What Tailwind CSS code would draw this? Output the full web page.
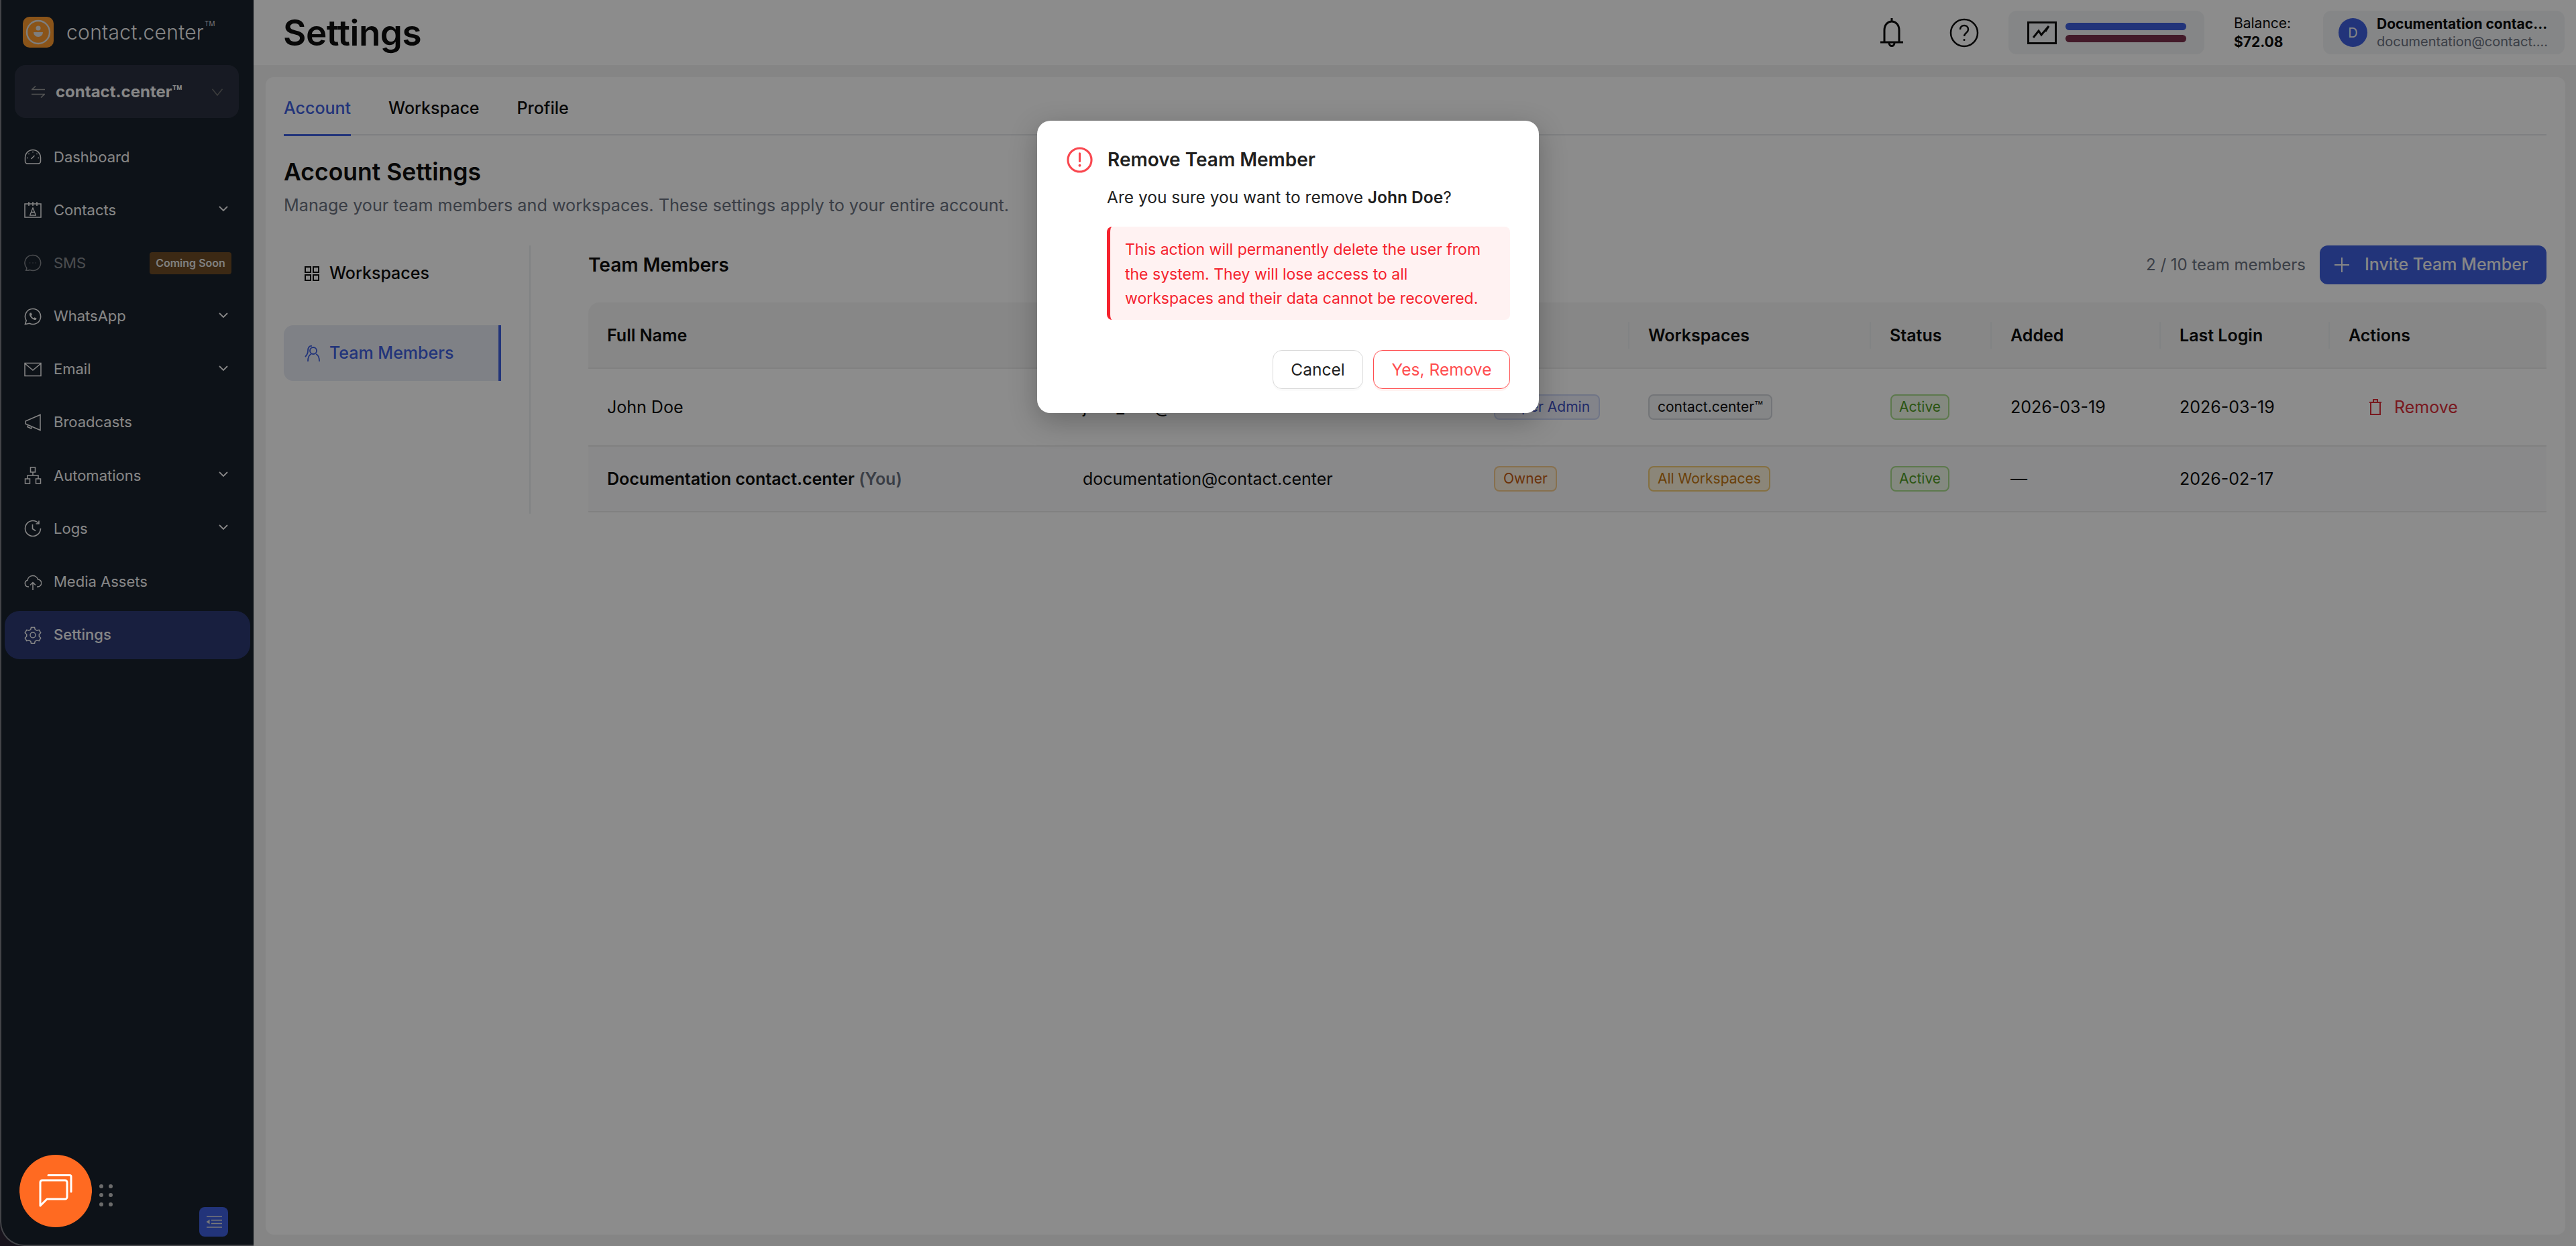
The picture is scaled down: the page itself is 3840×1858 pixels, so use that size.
<!DOCTYPE html>
<html lang="en">
<head>
    <meta charset="UTF-8">
    <title>Settings</title>
    <script src="https://cdn.jsdelivr.net/npm/@tailwindcss/browser@4"></script>
</head>

<body class="bg-[#2b2433] text-[#0d0d0d] font-['Inter','Noto_Sans',sans-serif] overflow-hidden">
    <div class="relative w-[3840px] h-[1858px] flex overflow-hidden">

        <!-- Sidebar -->
        <aside class="w-[378px] h-[1858px] shrink-0 bg-[#19212c] border-l-2 border-b-2 border-[#7a7d84] rounded-bl-[36px] flex flex-col text-[#f5f5f5]">
            <div class="h-[97px] pl-[32px] flex items-center gap-[19px] pb-[2px]">
                <div class="w-[46px] h-[46px] rounded-[10px] bg-[#fb9a2e] flex items-center justify-center">
                    <svg viewBox="0 0 40 40" class="w-[40px] h-[40px]" fill="none">
                        <circle cx="20" cy="20" r="17" stroke="#e5e5e5" stroke-width="2.4" />
                        <circle cx="20" cy="14" r="3.6" fill="#e5e5e5" />
                        <path d="M13 20h14a7 7 0 0 1-14 0z" fill="#e5e5e5" />
                    </svg>
                </div>
                <div class="flex items-start text-[30px] leading-[40px] font-light tracking-[0.3px]">contact.center<span class="text-[10px] leading-[14px] ml-[1px]">TM</span></div>
            </div>

            <div class="ml-[20px] w-[334px] h-[79px] rounded-[16px] bg-[#2a3141] flex items-center pl-[23px] pr-[22px]">
                <svg viewBox="0 0 24 24" class="w-[24px] h-[24px] text-[#9a9a9a]" fill="none" stroke="currentColor" stroke-width="1.6">
                    <path d="M2 8.5h20M8 3.5L2.5 8.5M2 15.5h20M16 20.5l5.5-5" />
                </svg>
                <span class="ml-[14px] text-[24px] font-bold">contact.center™</span>
                <svg viewBox="0 0 24 24" class="ml-auto w-[20px] h-[20px] text-[#6f6f6f]" fill="none" stroke="currentColor" stroke-width="1.8"><path d="M3 7l9 11 9-11" /></svg>
            </div>

            <nav class="mt-[22px] px-[5px] flex flex-col gap-[7.2px] text-[22px]">
                <a class="h-[72px] flex items-center pl-[29px] pr-[33px]">
                    <svg viewBox="0 0 26 26" class="w-[26px] h-[26px]" fill="none" stroke="currentColor" stroke-width="1.5"><path d="M5 23a3.5 3.5 0 0 1-3.5-3.5V14a11.5 11.5 0 0 1 23 0v5.500A3.500 3.500 0 0 1 21 23z" /><path d="M10.500 16l5-5M13 5v1.500M6.500 8l1 1M19.500 8l-1 1M4 14.500h1.500M22 14.500h-1.500" /></svg>
                    <span class="ml-[18px]">Dashboard</span>
                </a>
                <a class="h-[72px] flex items-center pl-[29px] pr-[33px]">
                    <svg viewBox="0 0 26 26" class="w-[26px] h-[26px]" fill="none" stroke="currentColor" stroke-width="1.5"><path d="M1 4h24v20H1zM7 1v6M13 1v6M19 1v6" /><path d="M9 20l4-10 4 10M10.500 16.500h5M8 21h10" stroke-width="1.300" /></svg>
                    <span class="ml-[18px]">Contacts</span>
                    <svg viewBox="0 0 14 10" class="ml-auto w-[14px] h-[10px] -mt-[4px]" fill="none" stroke="currentColor" stroke-width="1.800"><path d="M1 2l6 6 6-6" /></svg>
                </a>
                <a class="h-[72px] flex items-center pl-[29px] pr-[28px]">
                    <svg viewBox="0 0 26 26" class="w-[26px] h-[26px] opacity-50" fill="none" stroke="currentColor" stroke-width="1.500"><path d="M13 1.500a11.500 11.500 0 1 1-4.500 22c-2 .8-4.500 1-6 .6 1-1 1.500-2.500 1-4A11.500 11.500 0 0 1 13 1.500z" /><path d="M8.500 13h.6M12.700 13h.6M16.900 13h.6" stroke-width="1.800" /></svg>
                    <span class="ml-[18px] opacity-50">SMS</span>
                    <span class="ml-auto w-[122px] h-[33px] rounded-[4px] bg-[#6d4c26] flex items-center justify-center text-[16px] font-semibold text-[#e8e8e8]">Coming Soon</span>
                </a>
                <a class="h-[72px] flex items-center pl-[29px] pr-[33px]">
                    <svg viewBox="0 0 26 26" class="w-[26px] h-[26px]" fill="none" stroke="currentColor" stroke-width="1.600"><path d="M13 1.500a11.500 11.500 0 1 1-5 21.800L1.500 24.500l1.700-5.500A11.500 11.500 0 0 1 13 1.500z" /><path d="M9 7.500c-1.500 1-1.500 3 0 5.500s4 4.500 6.500 5c1.500.3 3-.8 3-2.300l-3-1.500-1.300 1.300c-1.500-.6-3-2.200-3.700-3.800l1.300-1.200-1.200-3z" fill="currentColor" stroke="none" /></svg>
                    <span class="ml-[18px]">WhatsApp</span>
                    <svg viewBox="0 0 14 10" class="ml-auto w-[14px] h-[10px] -mt-[4px]" fill="none" stroke="currentColor" stroke-width="1.800"><path d="M1 2l6 6 6-6" /></svg>
                </a>
                <a class="h-[72px] flex items-center pl-[29px] pr-[33px]">
                    <svg viewBox="0 0 26 26" class="w-[26px] h-[26px]" fill="none" stroke="currentColor" stroke-width="1.500"><path d="M1 3.500h24v19H1zM1 4l12 10L25 4" /></svg>
                    <span class="ml-[18px]">Email</span>
                    <svg viewBox="0 0 14 10" class="ml-auto w-[14px] h-[10px] -mt-[4px]" fill="none" stroke="currentColor" stroke-width="1.800"><path d="M1 2l6 6 6-6" /></svg>
                </a>
                <a class="h-[72px] flex items-center pl-[29px] pr-[33px]">
                    <svg viewBox="0 0 26 26" class="w-[26px] h-[26px]" fill="none" stroke="currentColor" stroke-width="1.500"><path d="M24 1.500v23L2 15v-4z" /><path d="M6 17l-1 2.500 5.500 2.500 1-2" /></svg>
                    <span class="ml-[18px]">Broadcasts</span>
                </a>
                <a class="h-[72px] flex items-center pl-[29px] pr-[33px]">
                    <svg viewBox="0 0 26 26" class="w-[26px] h-[26px]" fill="none" stroke="currentColor" stroke-width="1.500"><path d="M9.500 1h7v7h-7zM1.500 18h7v7h-7zM17.500 18h7v7h-7zM13 8v5M5 18v-5h16v5" /></svg>
                    <span class="ml-[18px]">Automations</span>
                    <svg viewBox="0 0 14 10" class="ml-auto w-[14px] h-[10px] -mt-[4px]" fill="none" stroke="currentColor" stroke-width="1.800"><path d="M1 2l6 6 6-6" /></svg>
                </a>
                <a class="h-[72px] flex items-center pl-[29px] pr-[33px]">
                    <svg viewBox="0 0 26 26" class="w-[26px] h-[26px]" fill="none" stroke="currentColor" stroke-width="1.600"><path d="M24.500 13A11.500 11.500 0 1 1 13 1.500c3.500 0 6.500 1.500 8.500 4M22 1.500v4.500h-4.500M12.500 7v6.500l4.500 3" /></svg>
                    <span class="ml-[18px]">Logs</span>
                    <svg viewBox="0 0 14 10" class="ml-auto w-[14px] h-[10px] -mt-[4px]" fill="none" stroke="currentColor" stroke-width="1.800"><path d="M1 2l6 6 6-6" /></svg>
                </a>
                <a class="h-[72px] flex items-center pl-[29px] pr-[33px]">
                    <svg viewBox="0 0 26 26" class="w-[26px] h-[26px]" fill="none" stroke="currentColor" stroke-width="1.500"><path d="M7 20H6a5 5 0 0 1-1-9.800A8 8 0 0 1 20.500 9 5.500 5.500 0 0 1 20 20h-1M13 25V14M9 17.500l4-4 4 4" /></svg>
                    <span class="ml-[18px]">Media Assets</span>
                </a>
                <a class="h-[72px] flex items-center pl-[29px] pr-[33px] rounded-[22px] bg-[#2c3a74] font-medium">
                    <svg viewBox="0 0 26 26" class="w-[26px] h-[26px]" fill="none" stroke="currentColor" stroke-width="1.500"><path d="M10.500 1.500h5l.8 3.200 2.700 1.600 3.200-.9 2.500 4.300-2.400 2.300v3l2.400 2.300-2.500 4.300-3.200-.9-2.700 1.600-.8 3.200h-5l-.8-3.200-2.700-1.600-3.200.9-2.500-4.300 2.400-2.300v-3L1.300 9.700l2.500-4.300 3.200.9 2.700-1.600z" /><circle cx="13" cy="13" r="4" /></svg>
                    <span class="ml-[18px]">Settings</span>
                </a>
            </nav>

            <div class="mt-auto mb-[12px] ml-[295px] w-[43px] h-[44px] rounded-[8px] bg-[#3e5fde] flex items-center justify-center">
                <svg viewBox="0 0 24 20" class="w-[24px] h-[20px]" fill="none" stroke="#dcdcdc" stroke-width="1.600"><path d="M1 2h23M8 7.500h16M8 12.500h16M1 18h23" /><path d="M5.500 6.500v7L0.500 10z" fill="#dcdcdc" stroke="none" /></svg>
            </div>
        </aside>

        <!-- Main column -->
        <div class="flex-1 h-[1858px] bg-[#f2f2f2] flex flex-col">
            <header class="h-[97px] shrink-0 bg-white flex items-center pl-[44px] pr-[18px]">
                <h1 class="text-[53px] leading-[64px] font-semibold tracking-[-0.5px]">Settings</h1>
                <div class="ml-auto flex items-center">
                    <svg viewBox="0 0 36 46" class="w-[36px] h-[46px]" fill="none" stroke="#0d0d0d" stroke-width="3"><path d="M18 1v5M7 36V19C7 11 12 6 18 6s11 5 11 13v17M1 37h34M14 38c0 6 8 6 8 0" /></svg>
                    <svg viewBox="0 0 44 44" class="ml-[68px] w-[44px] h-[44px]" fill="none" stroke="#0d0d0d" stroke-width="2.500"><circle cx="22" cy="22" r="20" /><path d="M16 17c0-8 12-8 12 0 0 5-6 5-6 10" /><circle cx="22" cy="32.500" r="1.500" fill="#0d0d0d" stroke="none" /></svg>
                    <div class="ml-[44px] w-[292px] h-[65px] rounded-[12px] bg-[#f3f4f6] flex items-center pl-[28px]">
                        <svg viewBox="0 0 44 34" class="w-[44px] h-[34px]" fill="none" stroke="#0d0d0d" stroke-width="3"><path d="M1.500 1.500h41v31h-41zM9 24l8-10 4 6 11-13-5 8" /></svg>
                        <div class="ml-[13px] w-[180px] flex flex-col gap-[7px]">
                            <div class="h-[11px] rounded-full bg-[#3e5fde]"></div>
                            <div class="h-[11px] rounded-full bg-[#7a314c]"></div>
                        </div>
                    </div>
                    <div class="ml-[44px] w-[133px] text-[21px] leading-[28px]">
                        <div>Balance:</div>
                        <div class="font-bold">$72.08</div>
                    </div>
                    <div class="w-[360px] h-[65px] rounded-[12px] bg-[#f3f4f6] flex items-center pl-[23px]">
                        <div class="w-[43px] h-[43px] rounded-full bg-[#3e5fde] flex items-center justify-center text-[20px] text-[#f5f5f5]">D</div>
                        <div class="ml-[14px] whitespace-nowrap">
                            <div class="text-[21px] leading-[27px] font-bold">Documentation contac...</div>
                            <div class="text-[20px] leading-[26px] text-[#6b7280]">documentation@contact....</div>
                        </div>
                    </div>
                </div>
            </header>

            <main class="flex-1 pl-[18px] pr-[17px] pt-[18px] pb-[17px] flex">
                <section class="flex-1 bg-white rounded-[12px] pl-[27px] pr-[28px] flex flex-col">
                    <!-- Tabs -->
                    <div class="h-[87px] border-b-2 border-[#e5e7eb] flex gap-[56px] text-[25px] font-medium">
                        <a class="h-[88px] pt-[28px] border-b-[3px] border-[#3e5fde] text-[#3e5fde]">Account</a>
                        <a class="pt-[28px]">Workspace</a>
                        <a class="pt-[28px]">Profile</a>
                    </div>

                    <h2 class="mt-[30px] text-[35.500px] leading-[50px] font-semibold">Account Settings</h2>
                    <p class="mt-[6px] text-[25.200px] leading-[36px] text-[#6b7280]">Manage your team members and workspaces. These settings apply to your entire account.</p>

                    <div class="mt-[42px] flex items-start">
                        <!-- Settings sub navigation -->
                        <div class="w-[368px] h-[400px] border-r-2 border-[#eceef1] pr-[42px] text-[25px]">
                            <a class="h-[83px] flex items-center pl-[31px] font-medium">
                                <svg viewBox="0 0 22 22" class="w-[22px] h-[22px]" fill="none" stroke="currentColor" stroke-width="2"><path d="M1 1h8v8H1zM13 1h8v8h-8zM1 13h8v8H1zM13 13h8v8h-8z" /></svg>
                                <span class="ml-[15px]">Workspaces</span>
                            </a>
                            <a class="h-[83px] mt-[36px] flex items-center pl-[31px] rounded-l-[14px] bg-[#e8ebf5] border-r-4 border-[#3e5fde] text-[#3e5fde] font-medium">
                                <svg viewBox="0 0 24 26" class="w-[24px] h-[26px]" fill="none" stroke="currentColor" stroke-width="1.800"><circle cx="13" cy="9" r="5" /><path d="M5 25c0-7 2-10 5-11M22 25c0-7-2-10-5-11M11 2C7 1 5 5 5 9c0 3-2 7-4 9" /></svg>
                                <span class="ml-[13px]">Team Members</span>
                            </a>
                        </div>

                        <!-- Team members table -->
                        <div class="flex-1 ml-[86px] min-w-0">
                            <div class="h-[58px] flex items-center">
                                <h3 class="text-[28px] font-semibold">Team Members</h3>
                                <span class="ml-auto text-[24px] text-[#6b7280]">2 / 10 team members</span>
                                <button class="ml-[21px] w-[338px] h-[58px] rounded-[12px] bg-[#3e5fde] text-[#f5f5f5] text-[25px] font-medium flex items-center pl-[22px]">
                                    <svg viewBox="0 0 22 22" class="w-[22px] h-[22px]" fill="none" stroke="currentColor" stroke-width="2"><path d="M11 0v22M0 11h22" /></svg>
                                    <span class="ml-[23px]">Invite Team Member</span>
                                </button>
                            </div>

                            <table class="mt-[27px] w-[2919px] table-fixed text-[25px] leading-[32px]">
                                <colgroup>
                                    <col class="w-[709px]">
                                    <col class="w-[613px]">
                                    <col class="w-[228px]">
                                    <col class="w-[360px]">
                                    <col class="w-[180px]">
                                    <col class="w-[252px]">
                                    <col class="w-[252px]">
                                    <col class="w-[325px]">
                                </colgroup>
                                <thead class="bg-[#f6f6f6] text-left">
                                    <tr class="h-[98px] border-b-2 border-[#ececec]">
                                        <th class="pl-[28px] font-semibold rounded-tl-[16px]">Full Name</th>
                                        <th class="pl-[28px] font-semibold">Email</th>
                                        <th class="pl-[28px] font-semibold">Role</th>
                                        <th class="pl-[30px] font-semibold"><div class="border-l-2 border-[#eceef1] -ml-[30px] pl-[28px] leading-[40px]">Workspaces</div></th>
                                        <th class="pl-[30px] font-semibold"><div class="border-l-2 border-[#eceef1] -ml-[30px] pl-[28px] leading-[40px]">Status</div></th>
                                        <th class="pl-[30px] font-semibold"><div class="border-l-2 border-[#eceef1] -ml-[30px] pl-[28px] leading-[40px]">Added</div></th>
                                        <th class="pl-[30px] font-semibold"><div class="border-l-2 border-[#eceef1] -ml-[30px] pl-[28px] leading-[40px]">Last Login</div></th>
                                        <th class="pl-[30px] font-semibold rounded-tr-[16px]"><div class="border-l-2 border-[#eceef1] -ml-[30px] pl-[28px] leading-[40px]">Actions</div></th>
                                    </tr>
                                </thead>
                                <tbody>
                                    <tr class="h-[116px] border-b-2 border-[#ececec]">
                                        <td class="pl-[28px]">John Doe</td>
                                        <td class="pl-[28px]">john_doe@contact.center</td>
                                        <td class="pl-[28px]"><span class="inline-flex items-center h-[38px] px-[13px] rounded-[8px] border-2 border-[#cdd5f5] bg-[#eef1fc] text-[21px] text-[#3e4fc0] whitespace-nowrap">Super Admin</span></td>
                                        <td class="pl-[30px]"><span class="inline-flex items-center h-[38px] px-[12px] rounded-[8px] border-2 border-[#d1d5db] bg-[#f3f4f6] text-[21px] whitespace-nowrap">contact.center™</span></td>
                                        <td class="pl-[31px]"><span class="inline-flex items-center h-[38px] px-[11px] rounded-[8px] border-2 border-[#a9dc8c] bg-[#f0fae9] text-[21px] text-[#4f9a1e]">Active</span></td>
                                        <td class="pl-[30px]">2026-03-19</td>
                                        <td class="pl-[30px]">2026-03-19</td>
                                        <td class="pl-[60px]">
                                            <span class="flex items-center text-[#dc2f3a]">
                                                <svg viewBox="0 0 20 24" class="w-[20px] h-[24px]" fill="none" stroke="currentColor" stroke-width="2"><path d="M1 5h18M7 5V1h6v4M3 5v18h14V5" /></svg>
                                                <span class="ml-[18px]">Remove</span>
                                            </span>
                                        </td>
                                    </tr>
                                    <tr class="h-[98px] border-b-2 border-[#ececec] bg-[#f9fafc]">
                                        <td class="pl-[28px] font-semibold whitespace-nowrap">Documentation contact.center <span class="text-[#6b7280]">(You)</span></td>
                                        <td class="pl-[28px]">documentation@contact.center</td>
                                        <td class="pl-[28px]"><span class="inline-flex items-center h-[38px] px-[12px] rounded-[8px] border-2 border-[#f6cd8f] bg-[#fdf2e0] text-[21px] text-[#c2590f]">Owner</span></td>
                                        <td class="pl-[30px]"><span class="inline-flex items-center h-[38px] px-[12px] rounded-[8px] border-2 border-[#f3cc78] bg-[#fdf4dd] text-[21px] text-[#c2740f] whitespace-nowrap">All Workspaces</span></td>
                                        <td class="pl-[31px]"><span class="inline-flex items-center h-[38px] px-[11px] rounded-[8px] border-2 border-[#a9dc8c] bg-[#f0fae9] text-[21px] text-[#4f9a1e]">Active</span></td>
                                        <td class="pl-[30px]">—</td>
                                        <td class="pl-[30px]">2026-02-17</td>
                                        <td></td>
                                    </tr>
                                </tbody>
                            </table>
                        </div>
                    </div>
                </section>
            </main>
        </div>

        <!-- Overlay -->
        <div class="absolute inset-0 bg-black/45"></div>

        <!-- Chat launcher stays above the overlay -->
        <div class="absolute left-[29px] top-[1722px] flex items-center">
            <div class="w-[108px] h-[108px] rounded-full bg-[#ff6a21] flex items-center justify-center">
                <svg viewBox="0 0 50 50" class="w-[50px] h-[50px]" fill="none" stroke="#fff" stroke-width="3" stroke-linejoin="round" stroke-linecap="round"><path d="M2 47V12a3 3 0 0 1 3-3h34a3 3 0 0 1 3 3v22a3 3 0 0 1-3 3H12z" /><path d="M14 1.500h32a2 2 0 0 1 2 2V26" /></svg>
            </div>
            <div class="ml-[11px] mt-[12px] grid grid-cols-2 gap-x-[8px] gap-y-[7.500px]">
                <span class="w-[6px] h-[6px] rounded-full bg-[#6b6b6b]"></span><span class="w-[6px] h-[6px] rounded-full bg-[#6b6b6b]"></span>
                <span class="w-[6px] h-[6px] rounded-full bg-[#6b6b6b]"></span><span class="w-[6px] h-[6px] rounded-full bg-[#6b6b6b]"></span>
                <span class="w-[6px] h-[6px] rounded-full bg-[#6b6b6b]"></span><span class="w-[6px] h-[6px] rounded-full bg-[#6b6b6b]"></span>
            </div>
        </div>

        <!-- Confirm dialog -->
        <div class="absolute left-[1546px] top-[180px] w-[748px] h-[436px] bg-white rounded-[20px] shadow-[0_12px_40px_rgba(0,0,0,0.25)] pl-[44px] pr-[43px] pt-[38px]">
            <div class="flex items-center h-[40px]">
                <svg viewBox="0 0 40 40" class="w-[39px] h-[39px]" fill="none" stroke="#f9474f" stroke-width="3.200"><circle cx="20" cy="20" r="18" /><path d="M20 10v12" stroke-linecap="round" /><circle cx="20" cy="28.500" r="2" fill="#f9474f" stroke="none" /></svg>
                <h4 class="ml-[22px] text-[28px] font-semibold text-[#1f1f1f]">Remove Team Member</h4>
            </div>
            <div class="ml-[60px]">
                <p class="mt-[18px] text-[24.500px] leading-[36px] text-[#1f1f1f]">Are you sure you want to remove <b class="font-semibold">John Doe</b>?</p>
                <div class="mt-[26px] h-[139px] rounded-[8px] border-l-[5px] border-[#f5222d] bg-[#fff2f2] pl-[22px] pt-[16px] text-[23px] leading-[36.500px] text-[#f5222d]">
                    This action will permanently delete the user from<br>the system. They will lose access to all<br>workspaces and their data cannot be recovered.
                </div>
                <div class="mt-[45px] flex justify-end gap-[15px] text-[24.500px]">
                    <button class="w-[135px] h-[58px] rounded-[14px] border-[1.500px] border-[#d9d9d9] bg-white shadow-[0_3px_0_rgba(0,0,0,0.02)] text-[#1f1f1f]">Cancel</button>
                    <button class="w-[204px] h-[58px] rounded-[14px] border-[1.500px] border-[#ff4d4f] bg-white shadow-[0_3px_0_rgba(255,38,5,0.06)] text-[#ff4d4f]">Yes, Remove</button>
                </div>
            </div>
        </div>
    </div>
</body>

</html>
